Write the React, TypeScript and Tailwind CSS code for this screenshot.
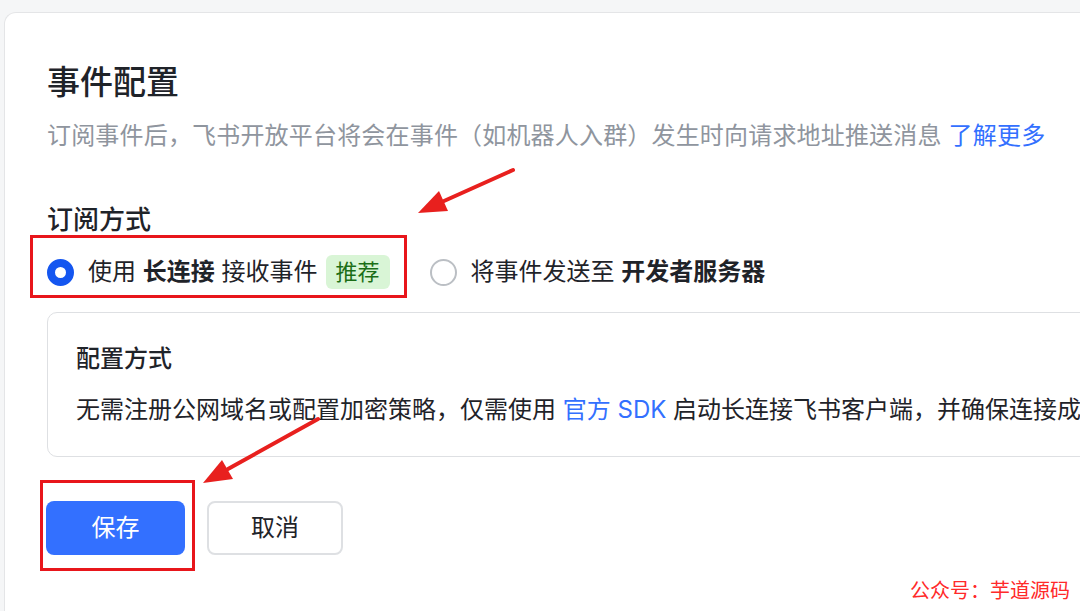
import React from 'react'

const font = 'font-["Inter","Noto_Sans_CJK_SC",sans-serif]'

function Radio({ checked }: { checked: boolean }) {
  if (checked) {
    return <span className="inline-block w-[27px] h-[27px] rounded-full border-[8px] border-[#1456f0] bg-white shrink-0" />
  }
  return <span className="inline-block w-[27px] h-[27px] rounded-full border-2 border-[#bbbfc4] bg-white shrink-0" />
}

export default function App() {
  return (
    <div className={`relative w-[1080px] h-[611px] overflow-hidden bg-[#f5f6f7] pt-3 pl-[4px] ${font}`}>
      <div className="bg-white h-[620px] rounded-tl-[12px] border-t border-l border-[#e4e5e7] pl-[42px] pt-[46px] text-[#1f2329]">
        <h1 className="text-[33px] leading-[46px] font-medium">事件配置</h1>
        <p className="mt-[13px] text-[24px] leading-[36px] tracking-[0.18px] text-[#8f959e] whitespace-nowrap">
          订阅事件后，飞书开放平台将会在事件（如机器人入群）发生时向请求地址推送消息{' '}
          <span className="text-[#3370ff]">了解更多</span>
        </p>

        <h2 className="mt-[48px] text-[26px] leading-[36px] font-medium">订阅方式</h2>

        <div className="mt-[16px] flex items-center h-[36px] text-[24px] whitespace-nowrap">
          <div className="flex items-center">
            <Radio checked />
            <span className="ml-[14px]">
              使用 <span className="font-semibold">长连接</span> 接收事件
            </span>
            <span className="ml-[8px] h-[34px] px-[10px] rounded-[6px] bg-[#d9f5d6] text-[#1b6e16] text-[22px] leading-[34px]">
              推荐
            </span>
          </div>
          <div className="flex items-center ml-[40px]">
            <Radio checked={false} />
            <span className="ml-[14px]">
              将事件发送至 <span className="font-semibold">开发者服务器</span>
            </span>
          </div>
        </div>

        <div className="mt-[22px] w-[1200px] border border-[#dee0e3] rounded-[10px] pl-[28px] pt-[28px] pb-[28px] text-[24px] leading-[36px] whitespace-nowrap">
          <div className="font-medium">配置方式</div>
          <div className="mt-[15px] text-[#1f2329]">
            无需注册公网域名或配置加密策略，仅需使用 <span className="text-[#3370ff]">官方 SDK</span> 启动长连接飞书客户端，并确保连接成功后保存配置
          </div>
        </div>

        <div className="mt-[44px] flex gap-[22px] -ml-[1px]">
          <button className="w-[139px] h-[54px] rounded-[8px] bg-[#3370ff] text-white text-[24px]">保存</button>
          <button className="w-[136px] h-[54px] rounded-[8px] border-2 border-[#dee0e3] bg-white text-[#1f2329] text-[24px]">取消</button>
        </div>
      </div>

      {/* annotations */}
      <div className="absolute left-[30px] top-[235px] w-[377px] h-[63px] border-[3px] border-[#e8161b]" />
      <div className="absolute left-[40px] top-[480px] w-[155px] h-[91px] border-[3px] border-[#e8161b]" />
      <svg className="absolute inset-0 pointer-events-none" width="1080" height="611">
        <line x1="513" y1="170" x2="444" y2="201" stroke="#e8201e" strokeWidth="4" strokeLinecap="round" />
        <polygon points="418,213 448,211 439,191" fill="#e8201e" />
        <line x1="318" y1="419" x2="228" y2="469" stroke="#e8201e" strokeWidth="4" strokeLinecap="round" />
        <polygon points="203,483 233,479 222,460" fill="#e8201e" />
      </svg>
      <div className="absolute left-[910px] top-[578px] text-[20px] leading-[26px] text-[#ff2a2a] whitespace-nowrap">公众号：芋道源码</div>
    </div>
  )
}
